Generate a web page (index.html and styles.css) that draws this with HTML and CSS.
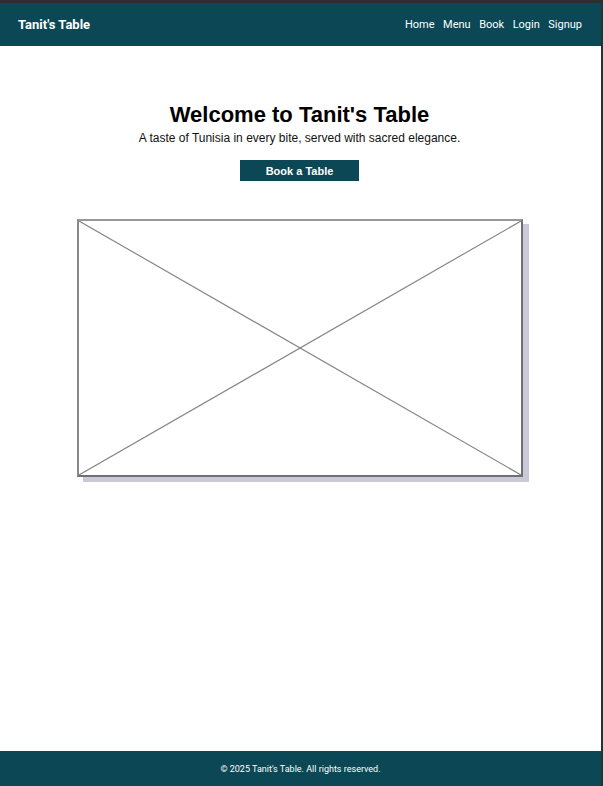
FILE: index.html
```html
<!DOCTYPE html>
<html lang="en">
<head>
<meta charset="utf-8">
<title>Tanit's Table</title>
<link rel="stylesheet" href="styles.css">
</head>
<body>
<div class="frame">
  <header class="topbar">
    <div class="brand">Tanit's Table</div>
    <nav class="nav">
      <a href="#">Home</a>
      <a href="#">Menu</a>
      <a href="#">Book</a>
      <a href="#">Login</a>
      <a href="#">Signup</a>
    </nav>
  </header>
  <main class="main">
    <section class="hero">
      <h1 class="title">Welcome to Tanit's Table</h1>
      <p class="tagline">A taste of Tunisia in every bite, served with sacred elegance.</p>
      <a class="btn" href="#">Book a Table</a>
    </section>
    <div class="picture">
      <svg class="placeholder" viewBox="0 0 442 254" preserveAspectRatio="none">
        <line x1="0" y1="0" x2="442" y2="254" stroke="#888" stroke-width="1.2"/>
        <line x1="442" y1="0" x2="0" y2="254" stroke="#888" stroke-width="1.2"/>
      </svg>
    </div>
  </main>
  <footer class="footer">© 2025 Tanit's Table. All rights reserved.</footer>
</div>
</body>
</html>
```
FILE: styles.css
```css
html, body {
  margin: 0;
  padding: 0;
  background: #2e2e2e;
}
.frame {
  box-sizing: border-box;
  min-height: 100vh;
  border-top: 3px solid #2e2e2e;
  border-right: 2px solid #2e2e2e;
  background: #fff;
  display: flex;
  flex-direction: column;
  font-family: "Liberation Sans", Arial, sans-serif;
}
.topbar {
  height: 43px;
  background: #0b4754;
  color: #fff;
  display: flex;
  align-items: center;
  justify-content: space-between;
  padding: 0 19px 0 18px;
  font-family: Roboto, "Liberation Sans", sans-serif;
}
.brand {
  font-weight: bold;
  font-size: 13px;
}
.nav {
  display: flex;
  gap: 8.5px;
}
.nav a {
  color: #fff;
  text-decoration: none;
  font-size: 11px;
}
.main {
  flex: 1;
  display: flex;
  flex-direction: column;
  align-items: center;
  padding-right: 2px;
}
.hero {
  display: flex;
  flex-direction: column;
  align-items: center;
  padding-top: 56px;
}
.title {
  margin: 0;
  font-size: 22px;
  line-height: 26px;
  font-weight: bold;
  color: #000;
}
.tagline {
  margin: 2px 0 0;
  font-size: 12px;
  line-height: 16px;
  color: #111;
}
.btn {
  margin-top: 14px;
  width: 119px;
  height: 21px;
  display: flex;
  align-items: center;
  justify-content: center;
  background: #0b4754;
  color: #fff;
  font-weight: bold;
  font-size: 11px;
  text-decoration: none;
}
.picture {
  margin-top: 38px;
  width: 446px;
  height: 258px;
  box-sizing: border-box;
  border: 2px solid #707070;
  border-top-color: #999;
  border-left-color: #888;
  box-shadow: 6px 5px 0 #c9c9d9;
  background: #fff;
}
.placeholder {
  display: block;
  width: 100%;
  height: 100%;
}
.footer {
  height: 35px;
  background: #0b4754;
  color: #fff;
  display: flex;
  align-items: center;
  justify-content: center;
  font-family: Roboto, "Liberation Sans", sans-serif;
  font-size: 9px;
}
```
